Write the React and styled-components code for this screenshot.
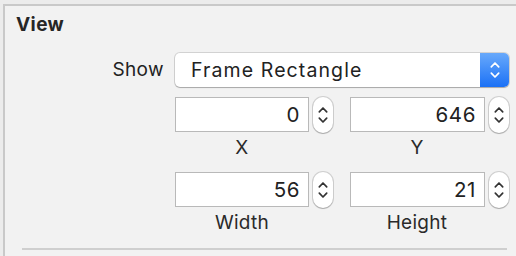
import React from 'react'
import styled, { createGlobalStyle } from 'styled-components'

const GlobalStyle = createGlobalStyle`
    html, body {
        margin: 0;
        padding: 0;
        background: #ececec;
        font-family: Inter, "Liberation Sans", sans-serif;
    }
`

const Chevrons = ({ color, width = 10, height = 24 }) => (
    <svg width={width} height={height} viewBox="0 0 10 24" fill="none">
        <path d="M1.3 8.8 L5 5 L8.7 8.8" stroke={color} strokeWidth="1.7" strokeLinecap="round" strokeLinejoin="round" />
        <path d="M1.3 15.2 L5 19 L8.7 15.2" stroke={color} strokeWidth="1.7" strokeLinecap="round" strokeLinejoin="round" />
    </svg>
)

const fields = [
    { label: 'X', value: '0' },
    { label: 'Y', value: '646' },
    { label: 'Width', value: '56' },
    { label: 'Height', value: '21' },
]

const App = () => {
    return (<>
    <GlobalStyle />
    <Panel>
        <Title>View</Title>
        <Form>
            <RowLabel>Show</RowLabel>
            <Popup>
                <PopupText>Frame Rectangle</PopupText>
                <PopupArrows><Chevrons color="#fff" /></PopupArrows>
            </Popup>
            <span />
            <FieldGrid>
                {fields.map(f => (
                    <FieldCell key={f.label}>
                        <FieldRow>
                            <NumberBox>{f.value}</NumberBox>
                            <Stepper><Chevrons color="#333" /></Stepper>
                        </FieldRow>
                        <FieldLabel>{f.label}</FieldLabel>
                    </FieldCell>
                ))}
            </FieldGrid>
        </Form>
        <Divider />
    </Panel>
    </>)
}
export default App

const Panel = styled.div`
    margin: 4px 0 0 3px;
    height: 252px;
    box-sizing: border-box;
    border-top: 2px solid #c9c9c9;
    border-left: 2px solid #c9c9c9;
    background: #f2f2f2;
    padding: 7px 7px 0 0;
    color: #222;
`
const Title = styled.div`
    padding-left: 11px;
    font-size: 19px;
    font-weight: 700;
    line-height: 24px;
    letter-spacing: 0.4px;
    color: #262626;
`
const Form = styled.div`
    display: grid;
    grid-template-columns: 170px 1fr;
    align-items: center;
    margin-top: 16px;
    row-gap: 10px;
`
const RowLabel = styled.div`
    text-align: right;
    padding-right: 11px;
    font-size: 19px;
    line-height: 24px;
    letter-spacing: 0.4px;
`
const Popup = styled.div`
    display: flex;
    height: 34px;
    background: #fff;
    border-radius: 5px;
    overflow: hidden;
    box-shadow: 0 0 0 1px rgba(0, 0, 0, 0.13), 0 1px 1px rgba(0, 0, 0, 0.2);
`
const PopupText = styled.div`
    flex: 1;
    padding-left: 16px;
    font-size: 19.5px;
    line-height: 34px;
    letter-spacing: 1.1px;
`
const PopupArrows = styled.div`
    width: 29px;
    display: flex;
    align-items: center;
    justify-content: center;
    background: linear-gradient(#68a9fb, #1b71f6);
`
const FieldGrid = styled.div`
    display: grid;
    grid-template-columns: 158px 159px;
    column-gap: 17px;
    row-gap: 13px;
`
const FieldCell = styled.div`
    display: flex;
    flex-direction: column;
`
const FieldRow = styled.div`
    display: flex;
    gap: 4px;
    align-items: flex-start;
`
const NumberBox = styled.div`
    flex: 1;
    height: 35px;
    box-sizing: border-box;
    background: #fff;
    border: 1px solid #b9b9b9;
    text-align: right;
    padding-right: 8px;
    font-size: 20.5px;
    line-height: 33px;
    letter-spacing: 0.6px;
`
const Stepper = styled.div`
    width: 20px;
    height: 36px;
    box-sizing: border-box;
    background: #fff;
    border-radius: 10px;
    display: flex;
    align-items: center;
    justify-content: center;
    box-shadow: 0 0 0 1px rgba(0, 0, 0, 0.14), 0 1px 1px rgba(0, 0, 0, 0.18);
`
const FieldLabel = styled.div`
    width: 134px;
    margin-top: 4px;
    text-align: center;
    font-size: 19px;
    line-height: 22px;
    letter-spacing: 0.3px;
    color: #2a2a2a;
`
const Divider = styled.div`
    margin: 14px 2px 0 17px;
    height: 2px;
    background: #cfcfcf;
`
